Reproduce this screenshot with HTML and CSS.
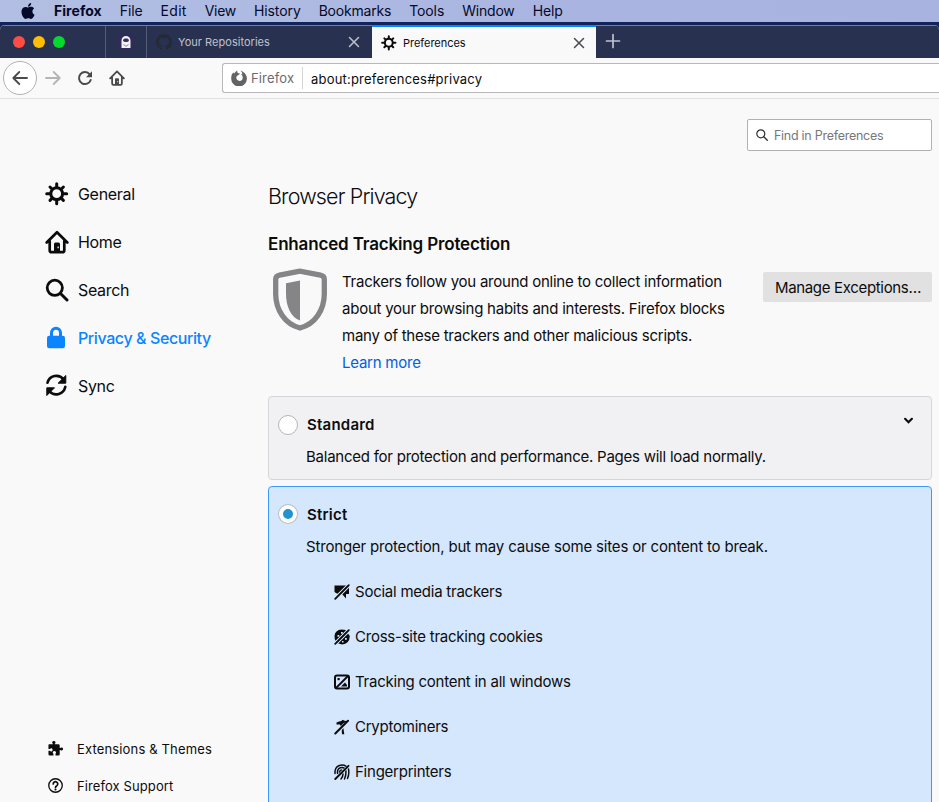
FILE: index.html
```html
<!DOCTYPE html>
<html lang="en">
<head>
<meta charset="utf-8">
<title>Preferences</title>
<link rel="stylesheet" href="styles.css">
</head>
<body>
<svg class="defs" width="0" height="0">
  <symbol id="gear" viewBox="0 0 24 24"><circle cx="11.700" cy="11.700" r="5.900" fill="none" stroke="currentColor" stroke-width="3"/><path d="M11.700 5V1.700M11.700 18.400v3.300M5 11.700H1.700M18.400 11.700h3.300M7 7 5 5M16.400 7l2-2M7 16.400l-2 2M16.400 16.400l2 2" stroke="currentColor" stroke-width="3" stroke-linecap="round"/></symbol>
  <symbol id="home" viewBox="0 0 24 24"><path d="M1.700 12.500 12 2.200l10.300 10.300M4.700 11v9.200q0 2 2 2h10.600q2 0 2-2V11" fill="none" stroke="currentColor" stroke-width="2.7" stroke-linecap="round" stroke-linejoin="round"/><path fill-rule="evenodd" d="M9 22v-8q0-1.500 1.500-1.500h3q1.500 0 1.500 1.500v8zM12.500 16.500v1.800h1.300v-1.800z" fill="currentColor"/></symbol>
  <symbol id="search" viewBox="0 0 24 24"><circle cx="9.800" cy="9.800" r="7.600" fill="none" stroke="currentColor" stroke-width="2.800"/><path d="m15.500 15.500 6.500 6.500" stroke="currentColor" stroke-width="3" stroke-linecap="round"/></symbol>
  <symbol id="close" viewBox="0 0 12 12"><path d="m1.500 1.500 9 9m0-9-9 9" stroke="currentColor" stroke-width="1.500" stroke-linecap="round"/></symbol>
  <symbol id="slash" viewBox="0 0 16 16"><path d="M0 14.200 14.200 0M1.800 16 16 1.800" stroke="#d5e7fc" stroke-width="1.300"/><path d="M1.200 14.800 14.800 1.200" stroke="currentColor" stroke-width="1.800" stroke-linecap="round"/></symbol>
</svg>

<header class="menubar">
  <svg class="apple" viewBox="0 0 24 24"><path fill="currentColor" d="M12.152 6.896c-.948 0-2.415-1.078-3.960-1.040-2.040.027-3.910 1.183-4.961 3.014-2.117 3.675-.546 9.103 1.519 12.090 1.013 1.454 2.208 3.090 3.792 3.039 1.520-.065 2.090-.987 3.935-.987 1.831 0 2.350.987 3.960.948 1.637-.026 2.676-1.480 3.676-2.948 1.156-1.688 1.636-3.325 1.662-3.415-.039-.013-3.182-1.221-3.220-4.857-.026-3.040 2.480-4.494 2.597-4.559-1.429-2.090-3.623-2.324-4.390-2.376-2-.156-3.675 1.090-4.610 1.090zM15.530 3.830c.843-1.012 1.400-2.427 1.245-3.830-1.207.052-2.662.805-3.532 1.818-.780.896-1.454 2.338-1.273 3.714 1.338.104 2.715-.688 3.559-1.701"/></svg>
  <nav class="menus"><b>Firefox</b><span>File</span><span class="edit">Edit</span><span class="view">View</span><span>History</span><span class="bookmarks">Bookmarks</span><span>Tools</span><span class="win">Window</span><span>Help</span></nav>
</header>

<div class="desktop">
<div class="window">
  <div class="tabs">
    <div class="lights"><i class="red"></i><i class="yellow"></i><i class="green"></i></div>
    <div class="pinned"><svg viewBox="0 0 16 16"><rect width="16" height="16" rx="5" fill="#312a5c"/><path d="M3.500 6.500a4.500 4.500 0 0 1 9 0V14h-9z" fill="#f1f1f6"/><rect x="5.200" y="4.500" width="5.600" height="3.500" rx="1.700" fill="#353154"/><path d="m5.500 10.500 2.500 1.800 2.500-1.800" fill="none" stroke="#8683a0" stroke-width="1"/></svg></div>
    <div class="tab">
      <svg class="favicon" viewBox="0 0 16 16"><path fill="#252a36" d="M8 0C3.580 0 0 3.580 0 8c0 3.540 2.290 6.530 5.470 7.590.400.070.550-.170.550-.380 0-.190-.010-.820-.010-1.490-2.010.370-2.530-.490-2.690-.940-.090-.230-.480-.940-.820-1.130-.280-.150-.680-.520-.010-.530.630-.010 1.080.580 1.230.820.720 1.210 1.870.870 2.330.660.070-.520.280-.870.510-1.070-1.780-.200-3.640-.890-3.640-3.950 0-.870.310-1.590.820-2.150-.080-.200-.360-1.020.080-2.120 0 0 .670-.210 2.200.820a7.600 7.600 0 0 1 4 0c1.530-1.040 2.200-.820 2.200-.820.440 1.100.160 1.920.080 2.120.510.560.820 1.270.820 2.150 0 3.070-1.870 3.750-3.650 3.950.290.250.540.730.540 1.480 0 1.070-.010 1.930-.010 2.200 0 .210.150.460.550.380A8 8 0 0 0 16 8c0-4.420-3.580-8-8-8"/></svg>
      <span class="tab-title">Your Repositories</span>
      <svg class="close"><use href="#close"/></svg>
    </div>
    <div class="tab active">
      <svg class="favicon"><use href="#gear"/></svg>
      <span class="tab-title">Preferences</span>
      <svg class="close"><use href="#close"/></svg>
    </div>
    <svg class="newtab" viewBox="0 0 16 16"><path d="M8 1.500v13M1.500 8h13" stroke="currentColor" stroke-width="1.700" stroke-linecap="round"/></svg>
  </div>

  <div class="toolbar">
    <div class="back"><svg viewBox="0 0 16 16"><path d="M15 8H1.500M7.300 2 1.300 8l6 6" fill="none" stroke="currentColor" stroke-width="1.800" stroke-linecap="round" stroke-linejoin="round"/></svg></div>
    <svg class="tool forward" viewBox="0 0 16 16"><path d="M1 8h13.500M8.700 2l6 6-6 6" fill="none" stroke="currentColor" stroke-width="1.800" stroke-linecap="round" stroke-linejoin="round"/></svg>
    <svg class="tool reload" viewBox="0 0 16 16"><path d="M12.700 4.300A6 6 0 1 0 13.700 10" fill="none" stroke="currentColor" stroke-width="2" stroke-linecap="round"/><path d="M15 1.200v6H9z" fill="currentColor"/></svg>
    <svg class="tool"><use href="#home"/></svg>
    <div class="urlbar">
      <svg class="brand" viewBox="0 0 16 16"><path fill="#636365" fill-rule="evenodd" d="M2.300 2.300q.200 1 .900 1.200Q4.500 1.500 6.300.500q-.300 1.500.500 2.400L9.200 3.800 7 5.200q-2 .7-1.700 3Q6 10.900 8.500 11q3.500-.5 3.200-3.800-.200-2.200-2-3.500 1 0 1.700.8Q11.500 2.500 9.400.6q1.300.1 2.800 1.300Q16 4.500 15.900 8.800A7.800 7.800 0 0 1 .2 8.500Q0 4.800 2.300 2.300z"/></svg>
      <span class="identity">Firefox</span>
      <span class="url">about:preferences#privacy</span>
    </div>
  </div>

  <div class="page">
    <aside class="sidebar">
      <nav class="categories">
        <a class="category"><svg><use href="#gear"/></svg><span>General</span></a>
        <a class="category"><svg><use href="#home"/></svg><span>Home</span></a>
        <a class="category"><svg><use href="#search"/></svg><span>Search</span></a>
        <a class="category selected"><svg viewBox="0 0 24 24"><path d="M6.500 11V6.700a4.500 4.500 0 0 1 9 0V11" fill="none" stroke="currentColor" stroke-width="3"/><rect x="2" y="9.700" width="18" height="12.500" rx="2.200" fill="currentColor"/></svg><span>Privacy &amp; Security</span></a>
        <a class="category"><svg viewBox="0 0 24 24"><path d="M2.500 8.800A9.200 9.200 0 0 1 18.500 5.200M20.300 12.700A9.200 9.200 0 0 1 4.500 17.300" fill="none" stroke="currentColor" stroke-width="2.600" stroke-linecap="round"/><path d="M20.800 1.500v7.700h-7.700zM1.800 21.500v-7.700h7.700z" fill="currentColor" stroke="currentColor" stroke-linejoin="round"/></svg><span>Sync</span></a>
      </nav>
      <nav class="links">
        <a><svg viewBox="0 0 16 16"><path fill="currentColor" d="M1 3.500h4.200V3Q4.300 2.500 4.500 1.300A1.800 1.800 0 0 1 8 1.300Q8 2.500 7.200 3v.5H11q1.500 0 1.500 1.500v2.500h.7q.8-.8 1.600-.6a1.700 1.700 0 0 1 0 3.300q-.9.100-1.600-.7h-.7V14q0 1.500-1.500 1.500H8v-2q.8-.7.500-1.600a1.800 1.800 0 0 0-3.400 0q-.2.900.7 1.600v2H2q-1.500 0-1.500-1.500v-3.500h1.600q.7 1 1.600.7a1.800 1.800 0 0 0 0-3.400q-.9-.2-1.600.8H.5V4z"/></svg><span class="t-ext">Extensions &amp; Themes</span></a>
        <a><svg viewBox="0 0 16 16"><circle cx="8" cy="8" r="7.200" fill="none" stroke="currentColor" stroke-width="1.400"/><path d="M5.600 6.300a2.400 2.400 0 1 1 3.900 1.900Q8 9 8 10" fill="none" stroke="currentColor" stroke-width="1.800" stroke-linecap="round"/><circle cx="8" cy="12.300" r="1.100" fill="currentColor"/></svg><span>Firefox Support</span></a>
      </nav>
    </aside>

    <main class="content">
      <div class="find"><svg viewBox="0 0 12 12"><circle cx="4.800" cy="4.800" r="4" fill="none" stroke="currentColor" stroke-width="1.200"/><path d="m7.800 7.800 3.500 3.500" stroke="currentColor" stroke-width="1.300" stroke-linecap="round"/></svg><span>Find in Preferences</span></div>
      <h1>Browser Privacy</h1>
      <h2>Enhanced Tracking Protection</h2>
      <section class="intro">
        <svg class="shield" viewBox="0 0 54 64"><path d="M27 3.200 6.500 7.200Q2.700 8 2.700 11.500V26q0 12 6.500 21.500T27 60q11.300-3 17.800-12.500T51.300 26V11.500q0-3.500-3.800-4.300z" fill="none" stroke="#858587" stroke-width="5.300"/><path d="M27 12.500v40Q20 50 16.500 42.500T13 26V15.300z" fill="#858587"/></svg>
        <p>Trackers follow you around online to collect information<br>about your browsing habits and interests. Firefox blocks<br>many of these trackers and other malicious scripts.<br><a>Learn more</a></p>
        <button>Manage Exceptions…</button>
      </section>

      <section class="card">
        <div class="card-head"><i class="radio"></i><h3>Standard</h3><svg class="chevron" viewBox="0 0 8 6"><path d="m1 1.500 3 3 3-3" fill="none" stroke="#0c0c0d" stroke-width="1.900" stroke-linecap="round"/></svg></div>
        <p>Balanced for protection and performance. Pages will load normally.</p>
      </section>
      <section class="card strict">
        <div class="card-head"><i class="radio checked"></i><h3>Strict</h3></div>
        <p>Stronger protection, but may cause some sites or content to break.</p>
        <ul>
          <li><svg viewBox="0 0 16 16"><path fill="currentColor" d="M.5 1.500H15V10h-3v4.500L8 10H4L2 9 .5 8z"/><use href="#slash"/></svg><span>Social media trackers</span></li>
          <li><svg viewBox="0 0 16 16"><path fill="currentColor" fill-rule="evenodd" d="M.5 7Q1 1 7.500.500l4 .5L15.800 7Q15.500 15 8 15.500 0 14.500.5 7zM3.500 6v1.800h1.800V6zM7 3v1.800h1.800V3zM11 9v1.800h1.800V9zM8 12v1.500h1.500V12z"/><use href="#slash"/></svg><span>Cross-site tracking cookies</span></li>
          <li><svg viewBox="0 0 16 16"><rect x="1" y="1.500" width="14" height="13" rx="2" fill="none" stroke="currentColor" stroke-width="2"/><path d="m2 14 12-12" stroke="currentColor" stroke-width="1.800"/><rect x="3.500" y="4" width="2.200" height="2.200" fill="currentColor"/><path d="m7 12.500 4-4 2 2.500v1.500z" fill="currentColor"/></svg><span>Tracking content in all windows</span></li>
          <li><svg viewBox="0 0 16 16"><path fill="currentColor" d="M2.500 3.500Q5 2 7.500 2l1-1.300L10.500 2h3.700L9 6.700l1.300 8.500H8L7.500 8.500 6 5.500H2.500z"/><path d="M1.300 15 15 1.300" stroke="#d5e7fc" stroke-width="3.500"/><path d="M1.300 14.500 14 1.800M8.500 2.500l4 .5" stroke="currentColor" stroke-width="2" stroke-linecap="round"/></svg><span>Cryptominers</span></li>
          <li><svg viewBox="0 0 16 16"><path fill="none" stroke="currentColor" stroke-width="1.500" stroke-linecap="round" d="M1 9.500V7Q2 1 8 .900q2.500 0 4 1.300M3.500 9.500V7Q4.500 3.500 8 3.500q1 0 2 .5M5.500 8q.5-2 2-2M12 7q0 5-1.500 8M14.500 5q1 5-1 9.500M9 10q0 3-2 5"/><path d="M1.300 15 14.500 1.800" stroke="currentColor" stroke-width="1.900" stroke-linecap="round"/></svg><span>Fingerprinters</span></li>
        </ul>
      </section>
    </main>
  </div>
</div>
</div>
</body>
</html>
```
FILE: styles.css
```css
* { box-sizing: border-box; }
body { margin: 0; height: 802px; overflow: hidden; font-family: Inter, "Liberation Sans", sans-serif; color: #0c0c0d; background: #f9f9fa; }
.defs { display: none; }
svg { flex: none; }
h1, h2, h3, p, ul { margin: 0; padding: 0; }
span, b, h1, h2, h3 { white-space: nowrap; }

.menubar { height: 22px; display: flex; align-items: center; padding-left: 20px; background: linear-gradient(90deg, #b2bfe3, #a9b5e0 60%, #a8b4df); color: #05092a; }
.apple { width: 16px; height: 16px; margin: -1px 18px 0 0; }
.menus { display: flex; gap: 18px; font-size: 14px; line-height: 22px; letter-spacing: -.1px; }
.menus b { font-weight: 700; letter-spacing: .05px; }
.menus .edit { letter-spacing: .3px; }
.menus .view { letter-spacing: -.3px; }
.menus .bookmarks, .menus .win { letter-spacing: -.2px; }

.desktop { background: #11245c; padding-top: 3px; }
.window { height: 777px; border-radius: 5px 5px 0 0; overflow: hidden; background: #f9f9fa; display: flex; flex-direction: column; }
.tabs { height: 33px; flex: none; display: flex; align-items: stretch; background: #293151; border-top: 1px solid #767c96; color: #bfc2ce; }
.lights { width: 105px; display: flex; align-items: center; gap: 8px; padding-left: 13px; }
.lights i { width: 12px; height: 12px; border-radius: 50%; }
.red { background: #ff4c45; }
.yellow { background: #ffbd04; }
.green { background: #05d92d; }
.pinned { width: 41px; border-left: 1px solid #565c77; display: flex; align-items: center; justify-content: center; }
.pinned svg { width: 16px; height: 16px; }
.tab { width: 226px; border-left: 1px solid #565c77; display: flex; align-items: center; padding: 0 12px 0 9px; font-size: 11px; letter-spacing: .03px; }
.tab-title { margin-left: 6px; flex: 1; }
.favicon { width: 16px; height: 16px; }
.close { width: 12px; height: 12px; }
.tab.active { width: 224px; margin-top: -1px; padding-right: 11px; background: #f9f9fa; border-left: 0; border-top: 2px solid #0a84ff; color: #0c0c0d; letter-spacing: -.03px; }
.active .close { color: #4a4a4f; }
.newtab { width: 16px; height: 16px; margin: 7px 0 0 9px; }

.toolbar { height: 41px; flex: none; display: flex; align-items: center; padding-left: 3px; background: #f9f9fa; border-bottom: 1px solid #dedee0; color: #4a4a4d; }
.back { width: 34px; height: 34px; border: 1px solid #b1b1b3; border-radius: 50%; display: flex; align-items: center; justify-content: center; background: #fff; }
.back svg, .tool { width: 16px; height: 16px; }
.tool { margin-left: 16px; }
.tool.forward { margin-left: 8px; color: #b4b4b6; }
.urlbar { margin-left: 97px; flex: 1; height: 30px; border: 1px solid #b8b8ba; border-right: 0; border-radius: 3px 0 0 3px; background: #fff; display: flex; align-items: center; padding-left: 8px; font-size: 13px; }
.brand { width: 16px; height: 16px; }
.identity { width: 52px; margin-left: 4px; padding-top: 1px; line-height: 21px; border-right: 1px solid #d4d4d6; color: #6b6b6f; letter-spacing: .15px; }
.url { margin-left: 8px; padding-top: 1px; color: #0c0c0d; letter-spacing: .2px; }

.page { flex: 1; min-height: 0; display: flex; }
.sidebar { width: 268px; padding: 71px 0 0 45px; display: flex; flex-direction: column; justify-content: space-between; }
.category { display: flex; align-items: center; gap: 9px; height: 48px; font-size: 16px; letter-spacing: -.32px; }
.category svg { width: 24px; height: 24px; }
.category.selected { color: #0a84ff; font-weight: 500; letter-spacing: -.4px; }
.links a { display: flex; align-items: center; gap: 14px; height: 37px; padding-left: 3px; font-size: 13px; letter-spacing: .1px; }
.links .t-ext { letter-spacing: .15px; }
.links svg { width: 15px; height: 15px; }
.links { margin-bottom: -2px; }

.content { width: 664px; padding-top: 20px; overflow: hidden; }
.find { width: 185px; height: 32px; margin-left: auto; border: 1px solid #b1b1b3; border-radius: 2px; background: #fff; display: flex; align-items: center; gap: 6px; padding-left: 8px; font-size: 12.5px; letter-spacing: -.27px; color: #77777a; }
.find svg { width: 12px; height: 12px; color: #303034; }
h1 { margin-top: 30px; font-size: 21.5px; font-weight: 300; line-height: 30px; letter-spacing: -.85px; }
h2 { margin-top: 21px; font-size: 17px; font-weight: 600; line-height: 24px; letter-spacing: -.16px; }
.intro { display: flex; height: 140px; padding-top: 12px; }
.shield { width: 54px; height: 64px; margin: 0 15px 0 5px; }
.intro p { flex: 1; font-size: 15px; line-height: 27px; letter-spacing: -.24px; white-space: nowrap; }
.intro p a { color: #0060df; }
button { width: 169px; height: 30px; margin-top: 4px; padding: 0 0 0 1px; border: 0; border-radius: 2px; background: #e1e1e2; color: #0c0c0d; font: 15px Inter, sans-serif; letter-spacing: -.33px; }
.card { height: 84px; border: 1px solid #d5d5d8; border-radius: 4px; background: #f1f1f3; padding: 16px 9px 0; font-size: 15px; }
.card-head { display: flex; align-items: center; height: 24px; }
.radio { width: 20px; height: 20px; margin-right: 9px; border: 1px solid #b5b5b8; border-radius: 50%; background: #fff; }
.checked { border: 4px solid #fff; background: #2292d0; box-shadow: 0 0 0 1px #b9bfc6; width: 18px; height: 18px; margin: -2px 10px 0 1px; }
h3 { margin-top: -2px; font-size: 15px; font-weight: 600; letter-spacing: .22px; }
.chevron { width: 9px; height: 7px; margin: -10px 9px 0 auto; }
.card p { margin: 8px 0 0 28px; line-height: 24px; letter-spacing: -.24px; white-space: nowrap; }
.strict { height: 330px; margin-top: 6px; border-color: #3b9aff; background: #d5e7fc; }
.strict p { letter-spacing: -.18px; }
ul { list-style: none; margin: 10px 0 0 56px; }
li { height: 45px; display: flex; align-items: center; gap: 5px; letter-spacing: -.24px; }
li svg { width: 16px; height: 16px; }
```
